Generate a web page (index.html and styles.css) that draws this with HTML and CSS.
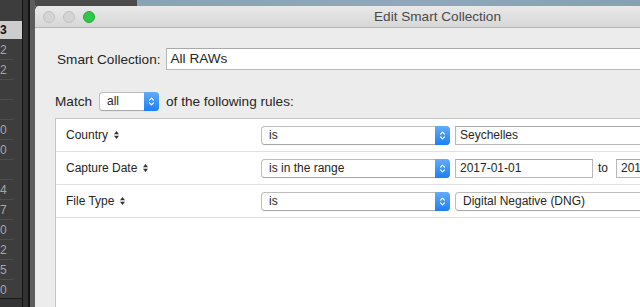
FILE: index.html
```html
<!DOCTYPE html>
<html>
<head>
<meta charset="utf-8">
<link rel="stylesheet" href="styles.css">
</head>
<body>
<div class="screen">
  <div class="sidebar">
    <div class="panel-col">
      <div class="panel">
        <div class="count spacer"></div>
        <div class="count selected"><span>3</span></div>
        <div class="count"><span>2</span></div>
        <div class="count"><span>2</span></div>
        <div class="count"><span></span></div>
        <div class="count"><span></span></div>
        <div class="count"><span>0</span></div>
        <div class="count"><span>0</span></div>
        <div class="count"><span></span></div>
        <div class="count"><span>4</span></div>
        <div class="count"><span>7</span></div>
        <div class="count"><span>0</span></div>
        <div class="count"><span>2</span></div>
        <div class="count"><span>5</span></div>
        <div class="count"><span>0</span></div>
      </div>
    </div>
    <div class="trough"></div>
    <div class="edge"></div>
  </div>
  <div class="desk">
    <div class="backdrop"></div>
    <div class="window">
      <div class="titlebar">
        <div class="lights">
          <span class="light"></span>
          <span class="light"></span>
          <span class="light green"></span>
        </div>
        <div class="title">Edit Smart Collection</div>
        <div></div>
      </div>
      <div class="content">
        <div class="name-row">
          <span class="name-label">Smart Collection:</span>
          <div class="textfield big">All RAWs</div>
        </div>
        <div class="match-row">
          <span>Match</span>
          <div class="popup match-popup">
            <span class="popup-label">all</span>
            <span class="popup-arrows"><svg width="7" height="11" viewBox="0 0 7 11"><path d="M1.5 4.2 L3.5 2.2 L5.5 4.2 M1.5 6.8 L3.5 8.8 L5.5 6.8" fill="none" stroke="#fff" stroke-width="1.2" stroke-linecap="round" stroke-linejoin="round"/></svg></span>
          </div>
          <span>of the following rules:</span>
        </div>
        <div class="rules">
          <div class="rule">
            <div class="field-name">Country <svg class="sort" width="5" height="8" viewBox="0 0 5 8"><path d="M0 3.2 L2.5 0 L5 3.2 Z M0 4.8 L2.5 8 L5 4.8 Z" fill="#333"/></svg></div>
            <div class="popup op">
              <span class="popup-label">is</span>
              <span class="popup-arrows"><svg width="7" height="11" viewBox="0 0 7 11"><path d="M1.5 4.2 L3.5 2.2 L5.5 4.2 M1.5 6.8 L3.5 8.8 L5.5 6.8" fill="none" stroke="#fff" stroke-width="1.2" stroke-linecap="round" stroke-linejoin="round"/></svg></span>
            </div>
            <div class="textfield value">Seychelles</div>
          </div>
          <div class="rule">
            <div class="field-name">Capture Date <svg class="sort" width="5" height="8" viewBox="0 0 5 8"><path d="M0 3.2 L2.5 0 L5 3.2 Z M0 4.8 L2.5 8 L5 4.8 Z" fill="#333"/></svg></div>
            <div class="popup op">
              <span class="popup-label">is in the range</span>
              <span class="popup-arrows"><svg width="7" height="11" viewBox="0 0 7 11"><path d="M1.5 4.2 L3.5 2.2 L5.5 4.2 M1.5 6.8 L3.5 8.8 L5.5 6.8" fill="none" stroke="#fff" stroke-width="1.2" stroke-linecap="round" stroke-linejoin="round"/></svg></span>
            </div>
            <div class="textfield date">2017-01-01</div>
            <span class="to">to</span>
            <div class="textfield value end">2017-12-31</div>
          </div>
          <div class="rule">
            <div class="field-name">File Type <svg class="sort" width="5" height="8" viewBox="0 0 5 8"><path d="M0 3.2 L2.5 0 L5 3.2 Z M0 4.8 L2.5 8 L5 4.8 Z" fill="#333"/></svg></div>
            <div class="popup op">
              <span class="popup-label">is</span>
              <span class="popup-arrows"><svg width="7" height="11" viewBox="0 0 7 11"><path d="M1.5 4.2 L3.5 2.2 L5.5 4.2 M1.5 6.8 L3.5 8.8 L5.5 6.8" fill="none" stroke="#fff" stroke-width="1.2" stroke-linecap="round" stroke-linejoin="round"/></svg></span>
            </div>
            <div class="popup value">
              <span class="popup-label">Digital Negative (DNG)</span>
            </div>
          </div>
        </div>
      </div>
    </div>
  </div>
</div>
</body>
</html>
```
FILE: styles.css
```css
* { box-sizing: border-box; }
html, body { margin: 0; padding: 0; }
body {
  width: 640px;
  height: 307px;
  overflow: hidden;
  font-family: "Liberation Sans", Arial, sans-serif;
  background: #2f2f2f;
}
.screen {
  display: flex;
  width: 640px;
  height: 307px;
  overflow: hidden;
}
.sidebar {
  display: flex;
  flex: 0 0 35px;
  height: 307px;
}
.panel-col {
  width: 23px;
  background: #343434;
  border-right: 1px solid #141414;
}
.panel {
  height: 299px;
  background: #3d3d3d;
  border-bottom: 1px solid #1a1a1a;
  overflow: hidden;
}
.count {
  height: 20px;
  display: flex;
  align-items: center;
  padding-left: 0;
  font-size: 12px;
  color: #a6a6a6;
  background: linear-gradient(#4e4e4e, #4e4e4e) 0 100% / 13px 1px no-repeat;
  white-space: nowrap;
}
.count.spacer { background: none; }
.count.selected {
  background: #cdcdcd;
  color: #111;
  font-weight: bold;
  margin-top: 1px;
  height: 18px;
  margin-bottom: 1px;
}
.trough {
  width: 7px;
  background: #313131;
  border-right: 2px solid #121212;
}
.edge {
  width: 5px;
  background: #5d5d5d;
}
.desk {
  flex: 1;
  display: flex;
  flex-direction: column;
  background: #4a4a4a;
  min-width: 0;
}
.backdrop {
  height: 7px;
  flex: 0 0 7px;
  background: linear-gradient(to right, #4a4a4a 0, #4a4a4a 102px, #88a2b6 102px, #8fa8bb 60%, #86a0b4 100%);
  border-bottom: 1px solid #6f8596;
}
.window {
  width: 805px;
  flex: 1;
  margin-top: -1px;
  background: #ececec;
  border-radius: 5px 5px 0 0;
  overflow: hidden;
}
.titlebar {
  height: 22px;
  display: grid;
  grid-template-columns: 1fr auto 1fr;
  align-items: center;
  background: linear-gradient(#e9e9e9, #d7d7d7);
  border-bottom: 1px solid #b4b4b4;
}
.lights {
  display: flex;
  gap: 8px;
  padding-left: 8px;
}
.light {
  width: 12px;
  height: 12px;
  border-radius: 50%;
  background: #d4d4d4;
  border: 1px solid #c0c0c0;
}
.light.green {
  background: #2fc746;
  border-color: #27aa3a;
}
.title {
  font-size: 13.6px;
  color: #4a4a4a;
}
.content {
  padding: 20px 0 0 20px;
  font-size: 13.6px;
  color: #262626;
}
.name-row {
  display: flex;
  align-items: center;
  height: 22px;
  padding-left: 2px;
}
.name-label { margin-right: 5px; }
.textfield {
  background: #fff;
  border: 1px solid #b8b8b8;
  border-top-color: #a9a9a9;
  white-space: nowrap;
  overflow: hidden;
}
.textfield.big {
  flex: 1;
  height: 22px;
  line-height: 20px;
  padding-left: 4px;
}
.match-row {
  display: flex;
  align-items: center;
  gap: 7px;
  height: 20px;
  margin-top: 21px;
}
.popup {
  display: flex;
  height: 19px;
  background: #fff;
  border: 1px solid #bdbdbd;
  border-bottom-color: #a9a9a9;
  border-radius: 4px;
  box-shadow: 0 0.5px 0.5px rgba(0,0,0,0.06);
  font-size: 12px;
  color: #262626;
}
.popup-label {
  flex: 1;
  padding-left: 7px;
  line-height: 17px;
  white-space: nowrap;
}
.popup-arrows {
  width: 15px;
  margin: -1px -1px -1px 0;
  background: linear-gradient(#63acfa, #1b7ff5);
  border-radius: 0 4px 4px 0;
  display: flex;
  align-items: center;
  justify-content: center;
}
.match-popup {
  width: 60px;
  height: 19px;
}
.rules {
  margin-top: 7px;
  background: #fff;
  border: 1px solid #c4c4c4;
  height: 300px;
}
.rule {
  display: flex;
  align-items: center;
  height: 33px;
  border-bottom: 1px solid #e0e0e0;
  font-size: 12px;
  color: #262626;
}
.field-name {
  width: 205px;
  padding-left: 10px;
  display: flex;
  align-items: center;
  gap: 6px;
}
.op { width: 189px; }
.textfield.value, .textfield.date {
  height: 19px;
  line-height: 17px;
  padding-left: 4px;
  font-size: 12px;
}
.value { margin-left: 5px; flex: 1; }
.date { margin-left: 5px; width: 138px; }
.to { margin: 0 8px 0 5px; }
.textfield.value.end { margin-left: 0; }
```
